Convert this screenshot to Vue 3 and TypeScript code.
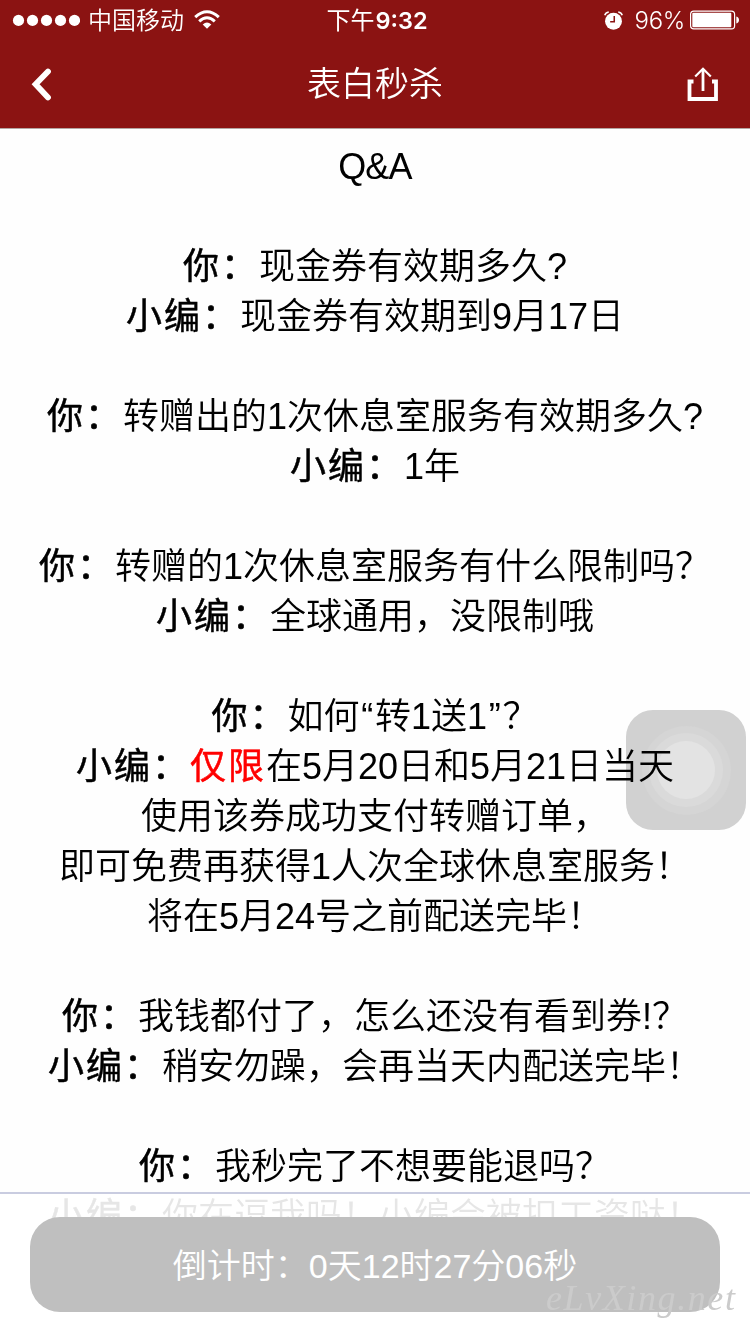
<script setup lang="ts">
interface Line {
  who?: string
  hot?: string
  text: string
}

const lines: Line[] = [
  { text: 'Q&A' },
  { text: '' },
  { who: '你：', text: '现金券有效期多久?' },
  { who: '小编：', text: '现金券有效期到9月17日' },
  { text: '' },
  { who: '你：', text: '转赠出的1次休息室服务有效期多久?' },
  { who: '小编：', text: '1年' },
  { text: '' },
  { who: '你：', text: '转赠的1次休息室服务有什么限制吗？' },
  { who: '小编：', text: '全球通用，没限制哦' },
  { text: '' },
  { who: '你：', text: '如何“转1送1”？' },
  { who: '小编：', hot: '仅限', text: '在5月20日和5月21日当天' },
  { text: '使用该券成功支付转赠订单，' },
  { text: '即可免费再获得1人次全球休息室服务！' },
  { text: '将在5月24号之前配送完毕！' },
  { text: '' },
  { who: '你：', text: '我钱都付了，怎么还没有看到券!？' },
  { who: '小编：', text: '稍安勿躁，会再当天内配送完毕！' },
  { text: '' },
  { who: '你：', text: '我秒完了不想要能退吗？' },
  { who: '小编：', text: '你在逗我吗！小编会被扣工资哒！' },
]

// Curly quotes get their own slightly wider cell.
const parts = (text: string): string[] => text.split(/([“”])/).filter(Boolean)
const isQuote = (s: string): boolean => s === '“' || s === '”'
</script>

<template>
  <div class="screen">
    <header class="top">
      <div class="status">
        <div class="side">
          <svg class="dots" width="68" height="12" viewBox="0 0 68 12" fill="#fff">
            <circle v-for="n in 5" :key="n" :cx="n * 14 - 7.5" cy="6.4" r="5.6" />
          </svg>
          <span class="carrier">中国移动</span>
          <svg class="wifi" width="26" height="20" viewBox="0 0 26 20" fill="none" stroke="#fff" stroke-width="3">
            <path d="M1.2 7.2Q13-3.8 24.8 7.2" />
            <path d="M5.2 11.4Q13 4.2 20.8 11.4" />
            <path d="M8.7 14.4Q13 10.4 17.3 14.4L13 18.8Z" fill="#fff" stroke="none" />
          </svg>
        </div>
        <div class="clock"><span>下午</span><b>9:32</b></div>
        <div class="side right">
          <svg class="alarm" width="19" height="19" viewBox="0 0 20 20" fill="none">
            <circle cx="10" cy="10.8" r="8.9" fill="#fff" />
            <path d="M.8 4.5Q1.5 1.5 5 1M19.2 4.5Q18.5 1.5 15 1" stroke="#fff" stroke-width="1.6" />
            <path d="M10.8 5.2V11.4H6.5" stroke="#8b1312" stroke-width="1.6" />
          </svg>
          <span class="pct">96%</span>
          <svg class="battery" width="50" height="20" viewBox="0 0 50 20">
            <rect x=".6" y="1.1" width="44" height="17.8" rx="3.2" fill="none" stroke="#fff" stroke-width="1.2" />
            <rect x="2.3" y="2.8" width="39" height="14.4" rx="1" fill="#fff" />
            <path d="M46.3 6.5Q49 7.2 49 10T46.3 13.5Z" fill="#fff" />
          </svg>
        </div>
      </div>
      <nav class="nav">
        <svg class="back" width="20" height="33" viewBox="0 0 20 33" fill="none" stroke="#fff" stroke-width="5.8" stroke-linecap="round" stroke-linejoin="miter">
          <path d="M17 3.5L4.6 16.2L17 29.5" />
        </svg>
        <h1>表白秒杀</h1>
        <svg class="share" width="32" height="35" viewBox="0 0 32 35" fill="none" stroke="#fff">
          <path d="M6.5 14.5H2.5V32H29V14.5H25" stroke-width="3.8" />
          <path d="M16 24V2" stroke-width="2.8" />
          <path d="M8.2 9.5L16 1.8L23.8 9.5" stroke-width="2.2" />
        </svg>
      </nav>
    </header>

    <main class="content">
      <p v-for="(line, i) in lines" :key="i"><b v-if="line.who">{{ line.who }}</b><b v-if="line.hot" class="hot">{{ line.hot }}</b><template v-for="(part, j) in parts(line.text)" :key="j"><span v-if="isQuote(part)" class="quote">{{ part }}</span><template v-else>{{ part }}</template></template></p>
    </main>

    <div class="assist">
      <div class="ring outer"><div class="ring middle"><div class="ring inner"></div></div></div>
    </div>

    <footer class="bar">
      <button class="countdown" type="button">倒计时：0天12时27分06秒</button>
    </footer>
    <div class="watermark">eLvXing.net</div>
  </div>
</template>

<style>
body {
  margin: 0;
  background: #fff;
}
</style>

<style scoped>
.screen {
  position: relative;
  width: 750px;
  height: 1334px;
  overflow: hidden;
  background: #fefefe;
  color: #000;
  font-family: "Liberation Sans", "Noto Sans CJK SC", sans-serif;
  font-weight: 350;
}
.top {
  box-sizing: border-box;
  height: 129px;
  background: #8b1312;
  border-bottom: 1px solid #b5a5a2;
  color: #fff;
}
.status {
  display: grid;
  grid-template-columns: 1fr auto 1fr;
  align-items: center;
  height: 40px;
  padding: 0 10px 0 12px;
}
.side {
  display: flex;
  align-items: center;
  font-size: 24px;
}
.right {
  justify-content: flex-end;
}
.carrier {
  margin: -3px 0 0 8px;
}
.wifi {
  margin-left: 10px;
}
.clock {
  margin: -4px 0 0 2px;
  font-size: 24px;
  font-weight: 400;
}
.clock b {
  margin-left: 1px;
  font-family: Inter, sans-serif;
  font-size: 23.5px;
  font-weight: 600;
}
.pct {
  margin: 0 5px 0 12px;
  font-family: Inter, sans-serif;
  font-size: 24px;
  letter-spacing: -0.3px;
}
.nav {
  display: grid;
  grid-template-columns: 60px 1fr 60px;
  align-items: center;
  height: 88px;
}
.back {
  margin-left: 31px;
}
.share {
  margin-left: -3px;
}
h1 {
  margin: -5px 0 0;
  text-align: center;
  font-size: 34px;
  font-weight: 350;
}
.content {
  padding-top: 13px;
  font-size: 36px;
  line-height: 50px;
  text-align: center;
  white-space: nowrap;
}
p {
  height: 50px;
  margin: 0;
}
p:first-child {
  letter-spacing: -0.8px;
}
p b {
  font-weight: 400;
  letter-spacing: 2px;
  -webkit-text-stroke: 0.5px currentColor;
}
.hot {
  color: #f00;
}
.quote {
  display: inline-block;
  width: 15.5px;
  text-align: center;
}
.assist {
  position: absolute;
  left: 626px;
  top: 710px;
  display: grid;
  place-items: center;
  width: 120px;
  height: 120px;
  border-radius: 27px;
  background: #d2d2d2;
  mix-blend-mode: multiply;
}
.ring {
  display: grid;
  place-items: center;
  border-radius: 50%;
}
.outer {
  width: 89px;
  height: 89px;
  background: #d6d6d6;
}
.middle {
  width: 74px;
  height: 74px;
  background: #dbdbdb;
}
.inner {
  width: 58px;
  height: 58px;
  background: #e4e4e4;
}
.bar {
  position: absolute;
  left: 0;
  right: 0;
  bottom: 0;
  box-sizing: border-box;
  height: 142px;
  padding: 23px 30px 0;
  border-top: 2px solid #c9cce0;
  background: rgba(255, 255, 255, 0.9);
}
.countdown {
  display: block;
  width: 690px;
  height: 95px;
  padding: 0 0 3px;
  border: 0;
  border-radius: 30px;
  background: #bfbfbf;
  color: #fff;
  font: inherit;
  font-size: 34px;
}
.watermark {
  position: absolute;
  left: 546px;
  top: 1276px;
  color: #cbcbcb;
  font: italic 36px/44px "Liberation Serif", serif;
  letter-spacing: 1.6px;
}
</style>
